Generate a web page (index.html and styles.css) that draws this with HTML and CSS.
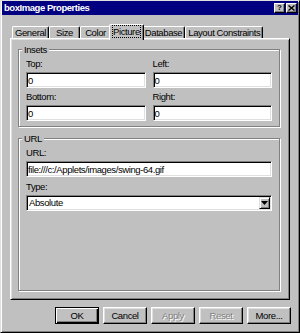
FILE: index.html
```html
<!DOCTYPE html>
<html>
<head>
<meta charset="utf-8">
<link rel="stylesheet" href="styles.css">
</head>
<body>
<div class="window">
  <div class="titlebar">
    <span class="title">boxImage Properties</span>
    <div class="title-btns">
      <span class="tbtn">?</span>
      <span class="tbtn"><svg width="7" height="6" viewBox="0 0 7 6"><path d="M0.5 0.5L6.5 5.5M6.5 0.5L0.5 5.5" stroke="#000" stroke-width="1.4" fill="none"/></svg></span>
    </div>
  </div>
  <div class="tabs">
    <div class="tab">General</div>
    <div class="tab narrow">Size</div>
    <div class="tab narrow">Color</div>
    <div class="tab active"><span class="focus">Picture</span></div>
    <div class="tab">Database</div>
    <div class="tab">Layout Constraints</div>
  </div>
  <div class="panel">
    <fieldset class="group">
      <legend>Insets</legend>
      <div class="grid">
        <div class="field"><label>Top:</label><input class="edit" value="0"></div>
        <div class="field"><label>Left:</label><input class="edit" value="0"></div>
        <div class="field"><label>Bottom:</label><input class="edit" value="0"></div>
        <div class="field"><label>Right:</label><input class="edit" value="0"></div>
      </div>
    </fieldset>
    <fieldset class="group grow">
      <legend>URL</legend>
      <div class="field"><label>URL:</label><input class="edit" value="file:///c:/Applets/images/swing-64.gif"></div>
      <div class="field"><label>Type:</label>
        <div class="combo"><span class="combo-text">Absolute</span><span class="drop"><svg width="7" height="4" viewBox="0 0 7 4"><path d="M0 0H7L3.5 4Z" fill="#000"/></svg></span></div>
      </div>
    </fieldset>
  </div>
  <div class="buttons">
    <button class="btn default">OK</button>
    <button class="btn">Cancel</button>
    <button class="btn" disabled>Apply</button>
    <button class="btn" disabled>Reset</button>
    <button class="btn">More...</button>
  </div>
</div>
</body>
</html>
```
FILE: styles.css
```css
* { box-sizing: border-box; }
html, body { margin: 0; padding: 0; }
body {
  width: 300px;
  height: 333px;
  background: #c0c0c0;
  font-family: "Liberation Sans", Arial, sans-serif;
  font-size: 9.5px;
  letter-spacing: -0.4px;
  color: #000;
  overflow: hidden;
}
.window {
  width: 300px;
  height: 333px;
  display: flex;
  flex-direction: column;
  border: 1px solid;
  border-color: #dfdfdf #000 #000 #dfdfdf;
  box-shadow: inset 1px 1px #fff, inset -1px -1px #808080;
  padding: 0 1px 1px 1px;
}
.titlebar {
  flex: none;
  height: 14px;
  background: #000080;
  color: #fff;
  display: flex;
  align-items: center;
  justify-content: space-between;
  padding: 0 1px 0 2px;
}
.title {
  font-weight: bold;
  font-size: 9.5px;
  letter-spacing: -0.45px;
  line-height: 14px;
}
.title-btns { display: flex; gap: 1px; }
.tbtn {
  width: 11px;
  height: 10px;
  background: #c0c0c0;
  border: 1px solid;
  border-color: #fff #000 #000 #fff;
  box-shadow: inset -1px -1px #808080;
  display: flex;
  align-items: center;
  justify-content: center;
  color: #000;
  font-weight: bold;
  font-size: 8px;
  line-height: 8px;
  letter-spacing: 0;
}
.tabs {
  flex: none;
  display: flex;
  align-items: flex-end;
  height: 14px;
  margin: 9px 8px 0;
  padding-left: 2px;
  position: relative;
  z-index: 1;
}
.tab {
  height: 12px;
  padding: 0 2px;
  line-height: 11px;
  border: 1px solid;
  border-bottom: none;
  border-color: #fff #000 transparent #fff;
  box-shadow: inset -1px 0 #808080;
  border-radius: 2px 2px 0 0;
  white-space: nowrap;
  text-align: center;
}
.tab.narrow { min-width: 31px; }
.tab.active {
  height: 16px;
  margin: 0 -2px -2px;
  padding: 1px 3px 0;
  background: #c0c0c0;
  position: relative;
  z-index: 1;
}
.focus { outline: 1px dotted #000; outline-offset: 0; }
.panel {
  flex: 1;
  margin: 0 8px;
  border: 1px solid;
  border-color: #fff #000 #000 #fff;
  box-shadow: inset 1px 1px #dfdfdf, inset -1px -1px #808080;
  padding: 5px 9px 8px 7px;
  display: flex;
  flex-direction: column;
  gap: 6px;
}
.group {
  margin: 0;
  min-width: 0;
  padding: 3px 7px 5px;
  border: 1px solid #808080;
  box-shadow: inset 1px 1px #fff, 1px 1px #fff;
}
.group.grow { flex: 1; }
legend {
  padding: 0 2px;
  margin-left: -4px;
  line-height: 11px;
  background: #c0c0c0;
}
.grid {
  display: grid;
  grid-template-columns: 1fr 1fr;
  column-gap: 7px;
  row-gap: 3px;
}
.field label {
  display: block;
  line-height: 11px;
  margin-bottom: 3px;
}
.group.grow .field + .field { margin-top: 4px; }
.edit {
  display: block;
  width: 100%;
  height: 16px;
  margin: 0;
  padding: 0 1px;
  font: inherit;
  letter-spacing: inherit;
  color: #000;
  background: #fff;
  border: 1px solid;
  border-color: #808080 #fff #fff #808080;
  box-shadow: inset 1px 1px #000, inset -1px -1px #dfdfdf;
  outline: none;
}
.combo {
  display: flex;
  align-items: center;
  height: 16px;
  padding: 1px;
  background: #fff;
  border: 1px solid;
  border-color: #808080 #fff #fff #808080;
  box-shadow: inset 1px 1px #000, inset -1px -1px #dfdfdf;
}
.combo-text { padding-left: 1px; line-height: 12px; }
.drop {
  margin-left: auto;
  width: 11px;
  height: 12px;
  background: #c0c0c0;
  border: 1px solid;
  border-color: #dfdfdf #000 #000 #dfdfdf;
  box-shadow: inset 1px 1px #fff, inset -1px -1px #808080;
  display: flex;
  align-items: center;
  justify-content: center;
}
.buttons {
  flex: none;
  display: flex;
  justify-content: flex-end;
  gap: 4px;
  margin: 7px 7px 7px 0;
}
.btn {
  width: 44px;
  height: 17px;
  padding: 0;
  font: inherit;
  letter-spacing: inherit;
  color: #000;
  background: #c0c0c0;
  border: 1px solid;
  border-color: #fff #000 #000 #fff;
  box-shadow: inset -1px -1px #808080, inset 1px 1px #dfdfdf;
}
.btn.default {
  border-color: #000;
  box-shadow: inset 1px 1px #fff, inset -1px -1px #000, inset -2px -2px #808080;
}
.btn:disabled {
  color: #808080;
  text-shadow: 1px 1px #fff;
}
```
